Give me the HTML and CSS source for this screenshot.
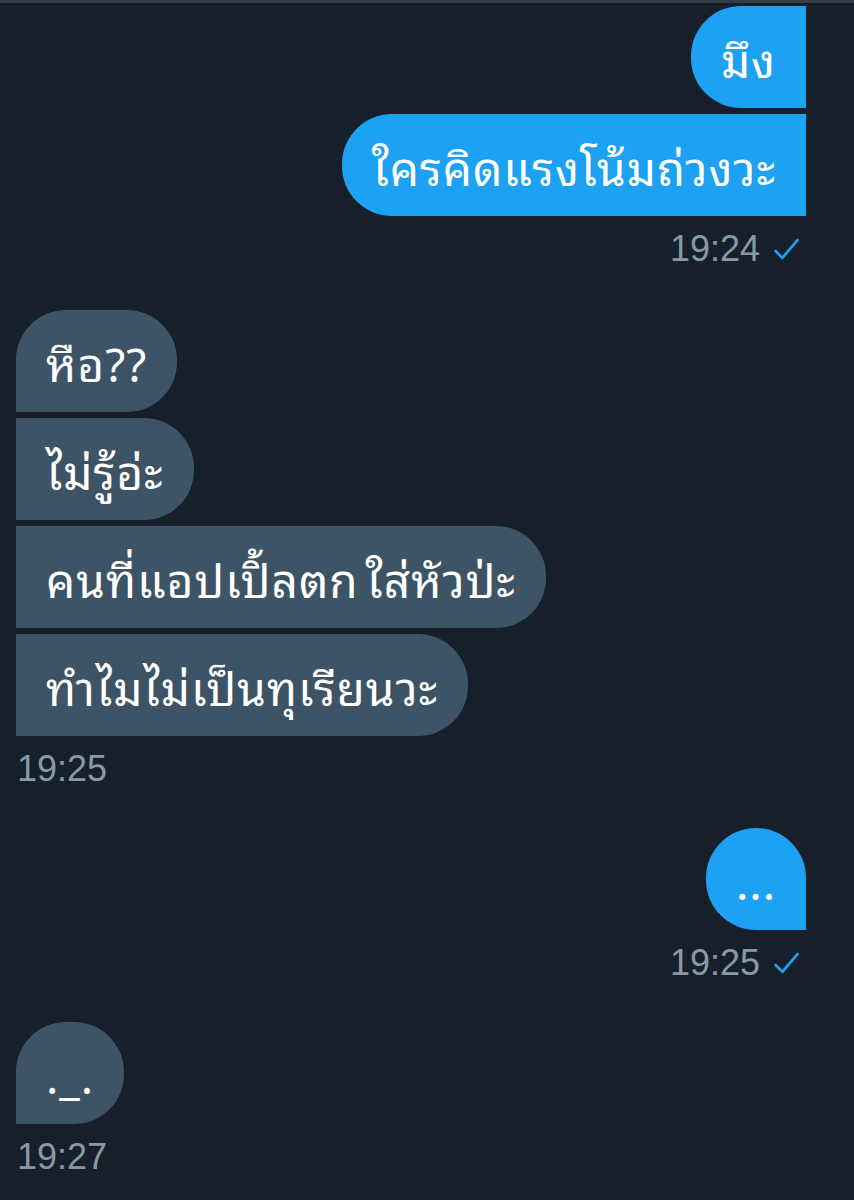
FILE: index.html
```html
<!DOCTYPE html>
<html lang="th">
<head>
  <meta charset="UTF-8">
  <title>Messages</title>
  <meta name="viewport" content="width=device-width, initial-scale=1">
  <link rel="stylesheet" href="styles.css">
</head>
<body>
  <div class="chat">
    <div class="group sent">
      <div class="bubble">มึง</div>
      <div class="bubble">ใครคิดแรงโน้มถ่วงวะ</div>
      <div class="meta">19:24
        <svg class="check" viewBox="0 0 24 24"><polyline points="1.5,13.5 8,20 22.5,3"/></svg>
      </div>
    </div>

    <div class="group recv first-recv">
      <div class="bubble first">หือ??</div>
      <div class="bubble">ไม่รู้อ่ะ</div>
      <div class="bubble">คนที่แอปเปิ้ลตก ใส่หัวป่ะ</div>
      <div class="bubble">ทำไมไม่เป็นทุเรียนวะ</div>
      <div class="meta">19:25</div>
    </div>

    <div class="group sent">
      <div class="bubble single">...</div>
      <div class="meta">19:25
        <svg class="check" viewBox="0 0 24 24"><polyline points="1.5,13.5 8,20 22.5,3"/></svg>
      </div>
    </div>

    <div class="group recv">
      <div class="bubble single">._.</div>
      <div class="meta">19:27</div>
    </div>
  </div>
</body>
</html>
```

FILE: styles.css
```css
body {
  margin: 0;
  background: #17202a;
  font-family: "Noto Sans Thai Looped", "Noto Sans Thai", "Noto Sans", "DejaVu Sans", sans-serif;
}
.chat {
  border-top: 3px solid #323d47;
  padding: 3px 48px 40px 16px;
  min-height: 1150px;
}
.group {
  display: flex;
  flex-direction: column;
  gap: 6px;
  margin-top: 37px;
}
.group:first-child {
  margin-top: 0;
}
.group.first-recv {
  margin-top: 39px;
}
.sent {
  align-items: flex-end;
}
.recv {
  align-items: flex-start;
}
.bubble {
  font-size: 46px;
  line-height: 50px;
  letter-spacing: 1px;
  word-spacing: -6px;
  padding: 26px 30px;
  color: #fff;
  white-space: nowrap;
}
.sent .bubble {
  background: #1da1f2;
  border-radius: 50px 0 0 50px;
}
.sent .bubble.single {
  border-radius: 50px 50px 0 50px;
}
.recv .bubble {
  background: #3d5466;
  border-radius: 0 50px 50px 0;
}
.recv .bubble.first {
  border-top-left-radius: 50px;
}
.recv .bubble.single {
  border-radius: 50px 50px 50px 0;
}
.meta {
  display: flex;
  align-items: center;
  gap: 14px;
  margin-top: 5px;
  font-family: "Liberation Sans", Arial, sans-serif;
  font-size: 36px;
  line-height: 44px;
  color: #8899a6;
}
.sent .meta {
  padding-right: 7px;
}
.recv .meta {
  padding-left: 1px;
}
.check {
  width: 25px;
  height: 25px;
  fill: none;
  stroke: #1da1f2;
  stroke-width: 2.6;
  stroke-linecap: round;
  stroke-linejoin: round;
}
```
